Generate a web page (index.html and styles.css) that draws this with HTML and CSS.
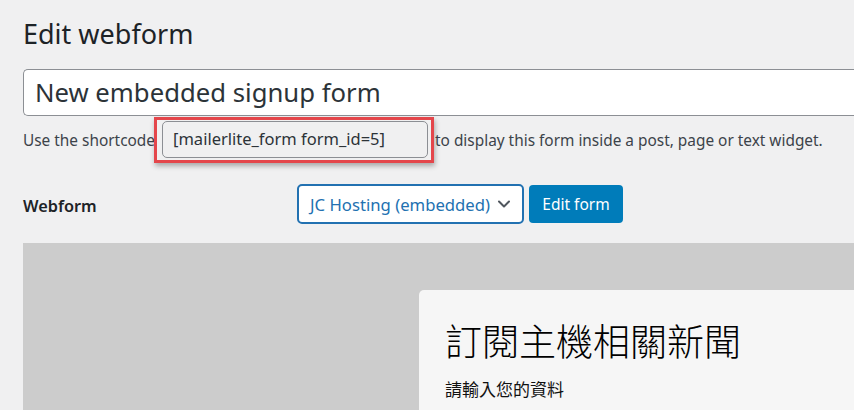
FILE: index.html
```html
<!DOCTYPE html>
<html lang="en">
<head>
<meta charset="utf-8">
<title>Edit webform</title>
<link rel="stylesheet" href="styles.css">
</head>
<body>
<div class="wrap">
  <h1 class="page-title">Edit webform</h1>
  <div class="title-field">New embedded signup form</div>
  <div class="shortcode-row">
    <span class="hint">Use the shortcode</span>
    <span class="highlight"><span class="shortcode">[mailerlite_form form_id=5]</span></span>
    <span class="hint">to display this form inside a post, page or text widget.</span>
  </div>
  <div class="webform-row">
    <span class="label">Webform</span>
    <div class="select">
      <span class="select-text">JC Hosting (embedded)</span>
      <svg class="chevron" width="16" height="16" viewBox="0 0 16 16"><path d="M3 5.5 L8 10.5 L13 5.5" fill="none" stroke="#50575e" stroke-width="2" stroke-linecap="round" stroke-linejoin="round"/></svg>
    </div>
    <span class="button">Edit form</span>
  </div>
  <div class="preview">
    <div class="card">
      <div class="card-title">訂閱主機相關新聞</div>
      <div class="card-sub">請輸入您的資料</div>
    </div>
  </div>
</div>
</body>
</html>
```
FILE: styles.css
```css
html, body {
  margin: 0;
  padding: 0;
  overflow: hidden;
  height: 410px;
}
body {
  background: #f0f0f1;
  font-family: "Noto Sans", "Open Sans", sans-serif;
  color: #3c434a;
}
.wrap {
  padding-left: 23px;
  width: 831px;
  height: 410px;
  overflow: hidden;
}
.page-title {
  margin: 0;
  padding-top: 16px;
  font-size: 27px;
  font-weight: 400;
  line-height: 36px;
  color: #1d2327;
}
.title-field {
  margin-top: 17px;
  box-sizing: border-box;
  height: 47px;
  width: calc(100% + 20px);
  background: #fff;
  border: 1px solid #8c8f94;
  border-right: none;
  border-radius: 5px 0 0 5px;
  padding-left: 11px;
  font-size: 25.7px;
  line-height: 45px;
  color: #2c3338;
}
.shortcode-row {
  display: flex;
  align-items: center;
  margin-top: 1px;
  height: 46px;
  font-size: 15.4px;
}
.hint {
  color: #3c434a;
  white-space: nowrap;
}
.highlight {
  margin-left: -1px;
  margin-right: 1px;
  border: 3px solid #e4464b;
  box-shadow: 1px 3px 5px rgba(0,0,0,0.3);
  padding: 1px 3px 2px 5px;
  display: flex;
  flex: none;
}
.shortcode {
  box-sizing: border-box;
  width: 266px;
  height: 37px;
  border: 1px solid #8c8f94;
  border-radius: 5px;
  background: #f0f0f1;
  padding-left: 10px;
  font-size: 16.5px;
  line-height: 34px;
  color: #2c3338;
}
.webform-row {
  display: flex;
  align-items: center;
  margin-top: 21px;
  height: 40px;
}
.label {
  width: 274px;
  font-weight: 600;
  font-size: 16.3px;
  color: #1d2327;
  padding-top: 4px;
}
.select {
  box-sizing: border-box;
  width: 227px;
  height: 40px;
  border: 2px solid #2271b1;
  border-radius: 5px;
  background: #fff;
  display: flex;
  align-items: center;
  padding-left: 11px;
  padding-right: 10px;
  justify-content: space-between;
}
.select-text {
  font-size: 16.7px;
  color: #2271b1;
}
.chevron {
  flex: none;
}
.button {
  margin-left: 5px;
  box-sizing: border-box;
  height: 38px;
  width: 94px;
  background: #007cba;
  color: #fff;
  border-radius: 4px;
  display: flex;
  align-items: center;
  justify-content: center;
  font-size: 15.5px;
}
.preview {
  margin-top: 19px;
  background: #cccccc;
  height: 169px;
  padding-top: 47px;
  padding-left: 396px;
  box-sizing: border-box;
}
.card {
  background: #f6f6f6;
  border-top-left-radius: 5px;
  height: 122px;
  padding-left: 26px;
  padding-top: 24px;
  box-sizing: border-box;
  font-family: "Noto Sans CJK TC", "Noto Sans", sans-serif;
  color: #000;
}
.card-title {
  font-size: 37px;
  font-weight: 300;
  line-height: 52px;
}
.card-sub {
  margin-top: 11px;
  font-size: 17px;
  font-weight: 400;
  line-height: 24px;
  color: #111;
}
```
